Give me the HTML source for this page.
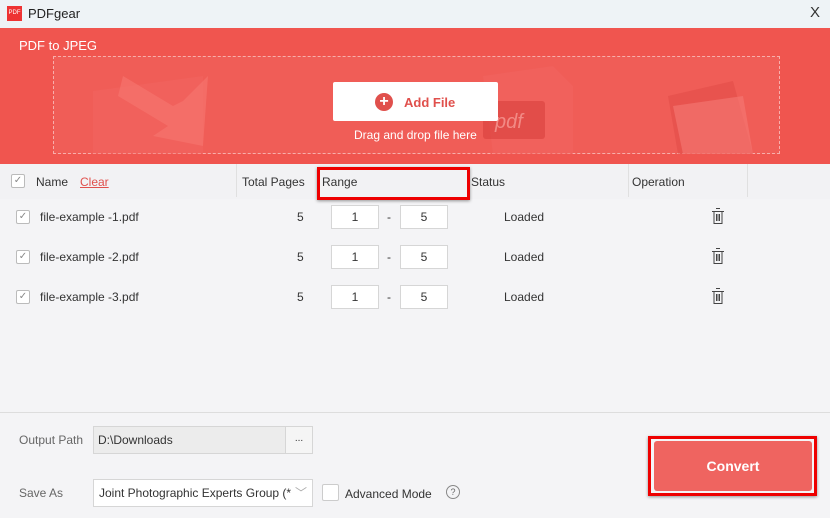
<!DOCTYPE html>
<html><head><style>
*{box-sizing:border-box;margin:0;padding:0}
body{width:830px;height:518px;overflow:hidden;font-family:"Liberation Sans",sans-serif;font-size:12px;color:#333;background:#f4f4f6;position:relative}
.abs{position:absolute}
.cb{position:absolute;width:14px;height:14px;border:1px solid #bbb;background:#fff;border-radius:2px;font-size:10px;color:#888;text-align:center;line-height:12px}
.inp{position:absolute;width:48px;height:24px;border:1px solid #d6d6d6;background:#fff;text-align:center;line-height:22px;font-size:12px}
</style></head><body>
<div class="abs" style="left:0;top:0;width:830px;height:28px;background:#eef3f6"></div>
<div class="abs" style="left:7px;top:6px;width:15px;height:15px;background:#e33;color:#fff;font-size:6px;line-height:15px;text-align:center">PDF</div>
<div class="abs" style="left:28px;top:6px;font-size:13px;color:#222">PDFgear</div>
<div class="abs" style="left:810px;top:4px;font-size:15px;color:#333;font-weight:300">X</div>
<div class="abs" style="left:0;top:28px;width:830px;height:136px;background:#f0554f"></div>
<div class="abs" style="left:19px;top:38px;font-size:13px;color:#fff">PDF to JPEG</div>
<div class="abs" style="left:53px;top:56px;width:727px;height:98px;border:1px dashed rgba(255,255,255,.5);background:rgba(255,255,255,.05)"></div>
<svg class="abs" style="left:53px;top:56px" width="727" height="98">
<path d="M40 35 L150 20 L150 98 L40 98Z" fill="#f26a64" opacity=".4"/>
<path d="M70 20 L120 50 L130 45 L155 20 L150 90 L100 80 L115 70 L65 40Z" fill="#f67670" opacity=".6"/>
<path d="M430 20 L500 10 L520 30 L520 98 L440 98Z" fill="#f26662" opacity=".5"/>
<rect x="430" y="45" width="62" height="38" rx="3" fill="#d9403c" opacity=".6"/>
<text x="442" y="72" font-size="20" fill="#f28a85" font-family="Liberation Sans" font-style="italic">pdf</text>
<path d="M615 40 L680 25 L700 98 L625 98Z" fill="#e04a46" opacity=".5"/>
<path d="M620 50 L690 40 L700 98 L630 98Z" fill="#f57a74" opacity=".6"/>
</svg>
<div class="abs" style="left:333px;top:82px;width:165px;height:39px;background:#fff;border-radius:2px"></div>
<div class="abs" style="left:375px;top:93px;width:18px;height:18px;border-radius:50%;background:#e0504c;color:#fff;font-size:16px;line-height:17px;text-align:center;font-weight:bold">+</div>
<div class="abs" style="left:404px;top:95px;font-size:13px;font-weight:bold;color:#e0504c">Add File</div>
<div class="abs" style="left:354px;top:128px;font-size:12px;color:#fff">Drag and drop file here</div>
<div class="abs" style="left:0;top:164px;width:830px;height:35px;background:#f2f2f4"></div>
<div class="abs" style="left:236px;top:164px;width:1px;height:33px;background:#e0e0e0"></div>
<div class="abs" style="left:628px;top:164px;width:1px;height:33px;background:#e0e0e0"></div>
<div class="abs" style="left:747px;top:164px;width:1px;height:33px;background:#e0e0e0"></div>
<div class="cb" style="left:11px;top:174px">✓</div>
<div class="abs" style="left:36px;top:175px">Name</div>
<div class="abs" style="left:80px;top:175px;color:#e0504c;text-decoration:underline">Clear</div>
<div class="abs" style="left:242px;top:175px">Total Pages</div>
<div class="abs" style="left:317px;top:167px;width:153px;height:33px;border:3px solid #e00;box-shadow:0 1px 3px rgba(0,0,0,.4)"></div>
<div class="abs" style="left:322px;top:175px">Range</div>
<div class="abs" style="left:471px;top:175px">Status</div>
<div class="abs" style="left:632px;top:175px">Operation</div>
<div id="rows"></div>
<div class="abs" style="left:0;top:412px;width:830px;height:1px;background:#ddd"></div>
<div class="abs" style="left:19px;top:433px;color:#666">Output Path</div>
<div class="abs" style="left:93px;top:426px;width:193px;height:28px;background:#ececec;border:1px solid #d6d6d6;line-height:26px;padding-left:4px">D:\Downloads</div>
<div class="abs" style="left:285px;top:426px;width:28px;height:28px;background:#f5f5f5;border:1px solid #d6d6d6;text-align:center;line-height:24px;font-size:10px">...</div>
<div class="abs" style="left:19px;top:486px;color:#666">Save As</div>
<div class="abs" style="left:93px;top:479px;width:220px;height:28px;background:#fff;border:1px solid #d6d6d6;line-height:26px;padding-left:5px">Joint Photographic Experts Group (*<span style="position:absolute;right:5px;color:#aaa">﹀</span></div>
<div class="abs" style="left:322px;top:484px;width:17px;height:17px;border:1px solid #ccc;background:#fff;border-radius:2px"></div>
<div class="abs" style="left:345px;top:487px">Advanced Mode</div>
<div class="abs" style="left:446px;top:485px;width:14px;height:14px;border:1px solid #888;border-radius:50%;font-size:9px;text-align:center;line-height:12px;color:#666">?</div>
<div class="abs" style="left:648px;top:436px;width:169px;height:60px;border:3px solid #e00;box-shadow:0 1px 3px rgba(0,0,0,.4)"></div>
<div class="abs" style="left:654px;top:441px;width:158px;height:50px;background:#ef6460;border-radius:3px;color:#fff;font-weight:bold;font-size:14px;text-align:center;line-height:50px">Convert</div>
<script>
var h='';[1,2,3].forEach(function(n,i){var y=217+i*40;
h+='<div class="cb" style="left:16px;top:'+(y-7)+'px">✓</div><div class="abs" style="left:40px;top:'+(y-7)+'px">file-example -'+n+'.pdf</div><div class="abs" style="left:297px;top:'+(y-7)+'px">5</div><div class="inp" style="left:331px;top:'+(y-12)+'px">1</div><div class="abs" style="left:387px;top:'+(y-7)+'px">-</div><div class="inp" style="left:400px;top:'+(y-12)+'px">5</div><div class="abs" style="left:504px;top:'+(y-7)+'px">Loaded</div>'+
'<svg class="abs" style="left:711px;top:'+(y-9)+'px" width="14" height="17"><path d="M5 .5h4M1 3.5h12M3 3.5v12h8v-12M5.5 6v7M7 6v7M8.5 6v7" stroke="#444" fill="none"/></svg>';});
document.getElementById('rows').innerHTML=h;
</script>
</body></html>
